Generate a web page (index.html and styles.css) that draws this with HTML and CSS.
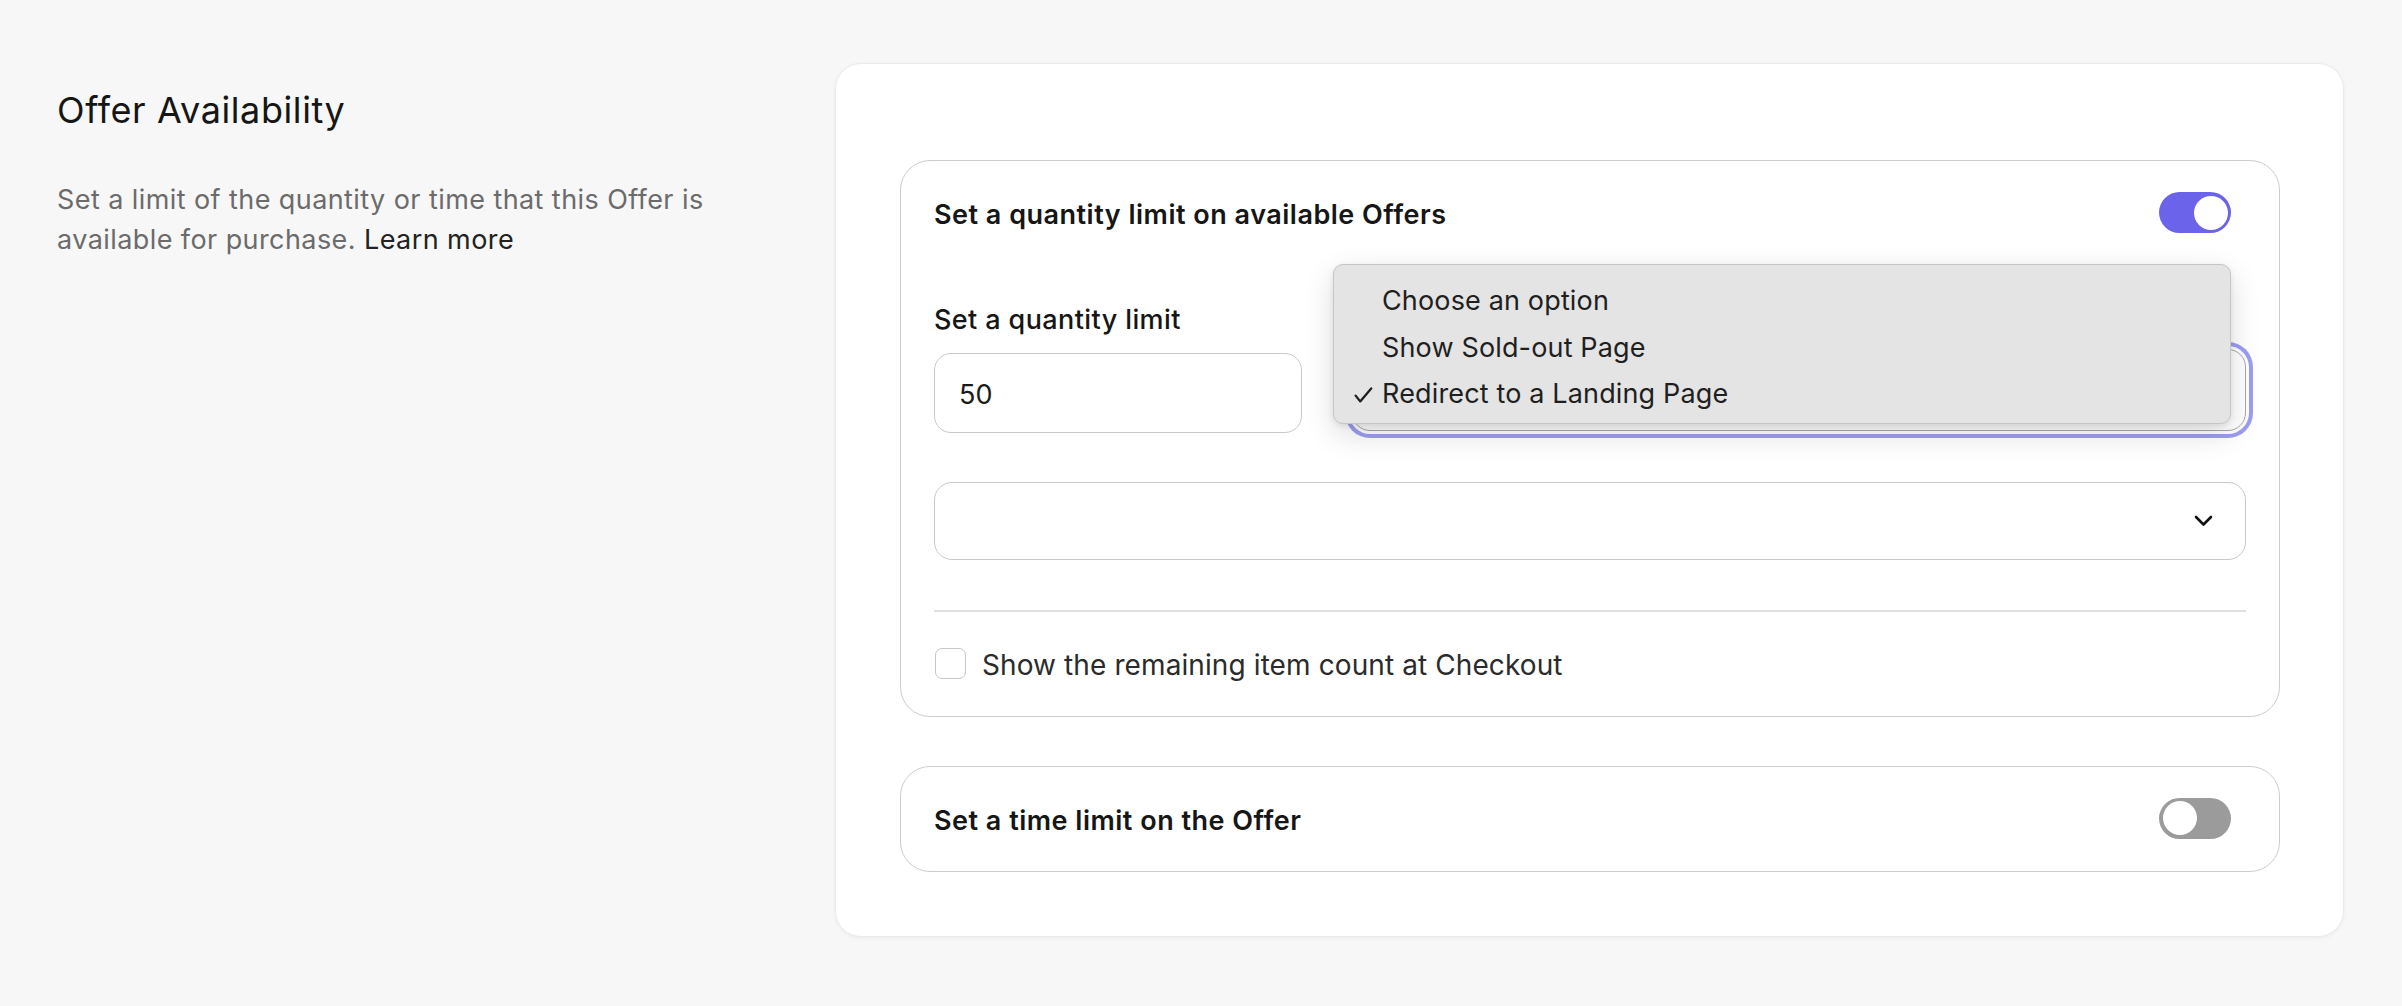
FILE: index.html
```html
<!DOCTYPE html>
<html lang="en">
<head>
<meta charset="utf-8">
<title>Offer Availability</title>
<link rel="stylesheet" href="styles.css">
</head>
<body>
<div class="page">
  <aside class="intro">
    <h2 class="intro-title">Offer Availability</h2>
    <p class="intro-text">Set a limit of the quantity or time that this Offer is available for purchase. <a class="learn" href="#">Learn more</a></p>
  </aside>

  <section class="card">
    <div class="panel">
      <div class="panel-head">
        <span class="panel-title">Set a quantity limit on available Offers</span>
        <span class="toggle toggle-on"><span class="knob"></span></span>
      </div>

      <div class="fields">
        <div class="field">
          <label class="field-label">Set a quantity limit</label>
          <div class="input">50</div>
        </div>
        <div class="field field-select">
          <div class="select select-focus"></div>
        </div>

        <div class="popup">
          <div class="popup-item">Choose an option</div>
          <div class="popup-item">Show Sold-out Page</div>
          <div class="popup-item popup-item-checked">
            <svg class="check" width="19" height="16" viewBox="0 0 19 16"><path d="M1.6 8.6 L6.2 14.4 L17.2 1.4" fill="none" stroke="#1f1f1f" stroke-width="2.3" stroke-linecap="round" stroke-linejoin="round"/></svg>
            Redirect to a Landing Page
          </div>
        </div>
      </div>

      <div class="select select-wide">
        <svg class="chevron" width="19" height="12" viewBox="0 0 19 12"><path d="M2 2 L9.5 9.5 L17 2" fill="none" stroke="#111" stroke-width="2.6" stroke-linecap="round" stroke-linejoin="round"/></svg>
      </div>

      <div class="divider"></div>

      <div class="check-row">
        <span class="checkbox"></span>
        <span class="check-label">Show the remaining item count at Checkout</span>
      </div>
    </div>

    <div class="panel panel-time">
      <div class="panel-head">
        <span class="panel-title">Set a time limit on the Offer</span>
        <span class="toggle toggle-off"><span class="knob"></span></span>
      </div>
    </div>
  </section>
</div>
</body>
</html>
```

FILE: styles.css
```css
* { box-sizing: border-box; }

html, body {
  margin: 0;
  padding: 0;
  background: #f7f7f7;
  font-family: "Inter", "Liberation Sans", sans-serif;
  color: #1a1a1a;
}

.page {
  display: flex;
  align-items: flex-start;
  gap: 58px;
  padding: 63px 58px 0 57px;
  min-height: 1006px;
}

.intro {
  width: 720px;
  flex: none;
  padding-top: 23px;
}

.intro-title {
  margin: 0;
  font-size: 36px;
  line-height: 48px;
  font-weight: 400;
  letter-spacing: 0.6px;
  color: #161616;
}

.intro-text {
  margin: 46px 0 0;
  font-size: 27px;
  line-height: 40px;
  letter-spacing: 0.42px;
  color: #6b6b6b;
}

.learn {
  color: #222;
  text-decoration: none;
}

.card {
  flex: 1;
  background: #fff;
  border: 1px solid #ebebeb;
  border-radius: 26px;
  box-shadow: 0 1px 4px rgba(0, 0, 0, 0.05);
  padding: 96px 63px 64px 64px;
}

.panel {
  border: 1.5px solid #cdcdcd;
  border-radius: 30px;
  padding: 31px 33px 32px 33px;
}

.panel-time {
  margin-top: 49px;
}

.panel-head {
  display: flex;
  align-items: center;
  justify-content: space-between;
  height: 41px;
}

.panel-title {
  font-size: 27px;
  line-height: 41px;
  font-weight: 600;
  letter-spacing: 0.5px;
  padding-top: 4px;
  color: #161616;
}

.toggle {
  width: 72px;
  height: 41px;
  border-radius: 21px;
  margin-right: 15px;
  display: flex;
  align-items: center;
  padding: 0 3.5px;
}

.toggle-on {
  background: #6b63ea;
  justify-content: flex-end;
}

.toggle-off {
  background: #9b9b9b;
  justify-content: flex-start;
}

.knob {
  width: 34px;
  height: 34px;
  border-radius: 50%;
  background: #fff;
}

.fields {
  position: relative;
  display: grid;
  grid-template-columns: 368px 1fr;
  column-gap: 50px;
  margin-top: 64px;
}

.field {
  display: flex;
  flex-direction: column;
}

.field-select {
  justify-content: flex-end;
  padding-bottom: 2px;
}

.field-label {
  font-size: 27px;
  line-height: 40px;
  font-weight: 500;
  letter-spacing: 0.4px;
  padding-top: 3px;
  margin-bottom: 13px;
  color: #161616;
}

.input {
  height: 80px;
  border: 1.5px solid #c9c9c9;
  border-radius: 17px;
  padding: 2px 24px 0;
  font-size: 27px;
  line-height: 77px;
  color: #1a1a1a;
}

.select {
  border: 1.5px solid #c9c9c9;
  border-radius: 18px;
  background: #fff;
}

.select-focus {
  height: 82px;
  border-color: #a8a8a8;
  box-shadow: 0 0 0 3px #fff, 0 0 0 7px rgba(124, 124, 236, 0.75);
}

.select-wide {
  margin-top: 49px;
  height: 78px;
  display: flex;
  align-items: center;
  justify-content: flex-end;
  padding-right: 32px;
}

.chevron {
  display: block;
}

.popup {
  position: absolute;
  left: 399px;
  top: -33px;
  width: 898px;
  height: 160px;
  background: #e3e4e3;
  border: 1.5px solid #c6c6c6;
  border-radius: 10px;
  box-shadow: 0 10px 30px rgba(0, 0, 0, 0.14), 0 2px 6px rgba(0, 0, 0, 0.08);
  padding: 13px 0 0 48px;
}

.popup-item {
  position: relative;
  font-size: 27px;
  line-height: 46.5px;
  letter-spacing: 0.15px;
  color: #1f1f1f;
}

.check {
  position: absolute;
  left: -28px;
  top: 16px;
}

.divider {
  margin-top: 50px;
  height: 1.5px;
  background: #e0e0e0;
}

.check-row {
  display: flex;
  align-items: center;
  gap: 16px;
  margin-top: 32px;
  height: 40px;
}

.checkbox {
  width: 31px;
  height: 31px;
  border: 1.5px solid #c6c6c6;
  border-radius: 7px;
  margin-left: 1px;
}

.check-label {
  font-size: 28px;
  line-height: 40px;
  letter-spacing: 0.1px;
  padding-top: 2px;
  color: #2b2b2b;
}
```
